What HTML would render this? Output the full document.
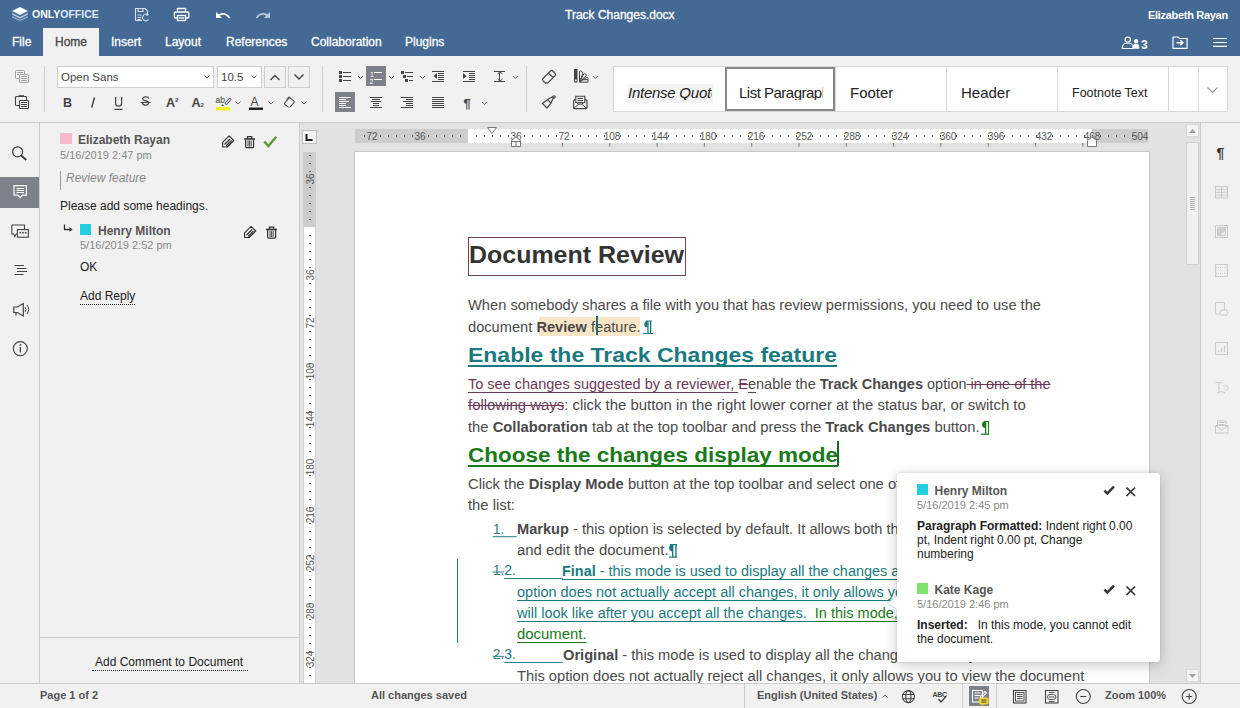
<!DOCTYPE html>
<html><head><meta charset="utf-8">
<style>
*{box-sizing:border-box;margin:0;padding:0}
html,body{width:1240px;height:708px;overflow:hidden;background:#f1f1f1;font-family:"Liberation Sans",sans-serif;color:#444}
.a{position:absolute}
.t{position:absolute;white-space:pre;line-height:1}
svg{position:absolute;overflow:visible}
.dl{position:absolute;white-space:pre;line-height:0;transform-origin:0 0}
.dl b{font-weight:bold}
#hdr{left:0;top:0;width:1240px;height:56px;background:#446995}
.tab{position:absolute;top:35px;font-size:12px;color:#fff;white-space:pre;line-height:14px;-webkit-text-stroke:0.3px currentColor}
#tb{left:0;top:56px;width:1240px;height:67px;background:#f1f1f1;border-bottom:1px solid #cbcbcb}
.sep{position:absolute;width:1px;background:#d5d5d5}
.combo{position:absolute;background:#fff;border:1px solid #cfcfcf;height:21px}
.btnb{position:absolute;border:1px solid #cfcfcf;height:21px;width:21px}
.act{position:absolute;background:#7d858c;width:20px;height:20px}
#lb{left:0;top:123px;width:40px;height:560px;background:#f1f1f1;border-right:1px solid #cbcbcb}
#pnl{left:40px;top:123px;width:260px;height:560px;background:#f1f1f1;border-right:1px solid #cbcbcb}
#cv{left:300px;top:123px;width:900px;height:560px;background:#e2e2e2;overflow:hidden}
#rb{left:1200px;top:123px;width:40px;height:560px;background:#f1f1f1;border-left:1px solid #cbcbcb}
#sb{left:0;top:683px;width:1240px;height:25px;background:#f1f1f1;border-top:1px solid #cbcbcb}
.gi{position:absolute;top:0;height:45px;border-right:1px solid #dadada;background:#fff}
.caret{position:absolute;width:5px;height:5px;border-right:1px solid #666;border-bottom:1px solid #666;transform:rotate(45deg)}
</style></head>
<body>
<!-- HEADER -->
<div id="hdr" class="a">
  <div class="a" style="left:43px;top:28px;width:56px;height:28px;background:#f1f1f1"></div>
  <div class="tab" style="left:12px">File</div>
  <div class="tab" style="left:55px;color:#444">Home</div>
  <div class="tab" style="left:111px">Insert</div>
  <div class="tab" style="left:165px">Layout</div>
  <div class="tab" style="left:226px">References</div>
  <div class="tab" style="left:311px">Collaboration</div>
  <div class="tab" style="left:405px">Plugins</div>
  <div class="t" style="left:565px;top:9px;font-size:12px;color:#fff;-webkit-text-stroke:0.3px #fff">Track Changes.docx</div>
  <div class="t" style="left:1148px;top:10px;font-size:11px;font-weight:bold;letter-spacing:-0.3px;color:#fff">Elizabeth Rayan</div>
  <div class="t" style="left:32px;top:9px;font-size:10.5px;font-weight:bold;color:#fff">ONLY<span style="color:#dfe8f5">OFFICE</span></div>
</div>
<svg style="left:0;top:0" width="1240" height="56">
 <g>
  <path d="M20 7l8 4-8 4-8-4z" fill="#fff"/>
  <path d="M12.5 13.2l7.5 3.8 7.5-3.8 0.5 0.3v1l-8 4-8-4v-1z" fill="#c9d6e8"/>
  <path d="M12.5 16.2l7.5 3.6 7.5-3.6 0.5 0.3v1l-8 3.6-8-3.6v-1z" fill="#9fb5d3"/>
 </g>
 <g fill="none" stroke="#d6e1ef" stroke-width="1.1">
  <path d="M142 20.5h-6.5v-12h9.5l2.5 2.5v3"/>
  <path d="M138 8.5v3h5v-3M137.5 15h4M137.5 17.5h4M137.5 19.5h3"/>
  <path d="M148.5 19.5a3.3 3.3 0 1 1-1-5M146.5 13.5l1.5 1-1.5 1.3"/>
 </g>
 <g fill="none" stroke="#fff" stroke-width="1.3">
  <rect x="174.4" y="12" width="14.4" height="6" rx="1.2"/>
  <path d="M177.5 12v-3.5h8v3.5"/>
  <rect x="177.5" y="15.5" width="8" height="5" fill="#446995"/>
  <path d="M179 18h5"/>
 </g>
 <path d="M216 12v6h6l-2.2-2.2c3-1.8 6.5-1 8.8 2.5l1.6-0.8c-2.5-4.5-7.5-5.8-11.7-3.2z" fill="#fff"/>
 <path d="M270 12v6h-6l2.2-2.2c-3-1.8-6.5-1-8.8 2.5l-1.6-0.8c2.5-4.5 7.5-5.8 11.7-3.2z" fill="#b6c7de"/>
 <g fill="none" stroke="#fff" stroke-width="1.2">
  <circle cx="1127.8" cy="39.6" r="2.6"/>
  <path d="M1122.4 48.5v-1.5a5.4 4 0 0 1 10.8 0v1.5z"/>
  <path d="M1173 37h5l1.5 1.5h7.6v9.8h-14.1z"/>
  <path d="M1213 38.5h14M1213 42.5h14M1213 46.4h14"/>
 </g>
 <circle cx="1136" cy="41.3" r="2.2" fill="#fff"/>
 <path d="M1132.8 48.8v-2a3.2 3 0 0 1 6.4 0v2z" fill="#fff"/>
 <path d="M1176.5 42.8h6M1180.3 40.3l2.5 2.5-2.5 2.5" fill="none" stroke="#fff" stroke-width="1.5"/>
 <text x="1141" y="48.5" font-family="Liberation Sans" font-weight="bold" font-size="12" fill="#fff">3</text>
</svg>
<!-- TOOLBAR -->
<div id="tb" class="a"></div>
<!-- toolbar contents -->
<svg style="left:0;top:0" width="1240" height="123">
 <g fill="none" stroke="#a0a0a0" stroke-width="1">
  <rect x="15.5" y="70.5" width="9" height="8" rx="0.8" fill="#f1f1f1"/>
  <rect x="19.5" y="74.5" width="9" height="8" rx="0.8" fill="#f1f1f1"/>
  <path d="M17 72.5h6M17 74.5h2M21 76.5h6M21 78.5h6M21 80.5h6"/>
 </g>
 <g fill="none" stroke="#444" stroke-width="1.1">
  <rect x="15.5" y="96.5" width="11" height="9" rx="0.8"/>
  <rect x="19.5" y="100.5" width="9" height="8" rx="0.8" fill="#f1f1f1"/>
  <path d="M21 102.5h6M21 104.5h6M21 106.5h6" stroke-width="1"/>
  <path d="M18.5 96h5.5" stroke-width="1.6"/>
 </g>
 <rect x="44" y="66" width="1" height="46" fill="#cfcfcf"/>
 <rect x="322" y="66" width="1" height="46" fill="#cfcfcf"/>
 <rect x="526" y="66" width="1" height="46" fill="#cfcfcf"/>
 <!-- font combos -->
 <rect x="57.5" y="66.5" width="156" height="21" fill="#fff" stroke="#cfcfcf"/>
 <rect x="217.5" y="66.5" width="44" height="21" fill="#fff" stroke="#cfcfcf"/>
 <rect x="264.5" y="66.5" width="21" height="21" fill="none" stroke="#cfcfcf"/>
 <rect x="288.5" y="66.5" width="21" height="21" fill="none" stroke="#cfcfcf"/>
 <g fill="none" stroke="#555" stroke-width="1">
  <path d="M204.5 75.5l2.5 2.5 2.5-2.5M251.5 75.5l2.5 2.5 2.5-2.5"/>
 </g>
 <g fill="none" stroke="#444" stroke-width="1.4">
  <path d="M270.5 80l4.5-4.5 4.5 4.5M294.5 74.5l4.5 4.5 4.5-4.5"/>
 </g>
 <!-- carets -->
 <g fill="none" stroke="#666" stroke-width="1">
  <path d="M235.5 101.5l2.5 2.5 2.5-2.5M268.5 101.5l2.5 2.5 2.5-2.5M301.5 101.5l2.5 2.5 2.5-2.5"/>
  <path d="M358 76l2.5 2.5 2.5-2.5M389 76l2.5 2.5 2.5-2.5M420 76l2.5 2.5 2.5-2.5M513 76l2.5 2.5 2.5-2.5M593 76l2.5 2.5 2.5-2.5M482 102l2.5 2.5 2.5-2.5"/>
 </g>
 <!-- B I U S -->
 <text x="63" y="107" font-family="Liberation Sans" font-weight="bold" font-size="12.5" fill="#444">B</text>
 <path d="M94.5 97.5l-2.8 10" stroke="#444" stroke-width="1.5"/>
 <g stroke="#444" stroke-width="1.2" fill="none">
  <path d="M115.6 97v6.2a3 3 0 0 0 6 0V97M114.5 109.4h8"/>
  <path d="M148.6 98.8a3 2 0 0 0-6 0.2c0 1.8 6 1.6 6 3.8a3 2.2 0 0 1-6.2 0M140.6 102.5h10"/>
 </g>
  <text x="166" y="107" font-family="Liberation Sans" font-weight="bold" font-size="12.5" fill="#444">A</text>
 <text x="175" y="102" font-family="Liberation Sans" font-weight="bold" font-size="6" fill="#444">2</text>
 <text x="191.5" y="107" font-family="Liberation Sans" font-weight="bold" font-size="12.5" fill="#444">A</text>
 <text x="200.5" y="107" font-family="Liberation Sans" font-weight="bold" font-size="6" fill="#444">2</text>
 <!-- highlight -->
 <text x="215.5" y="103" font-family="Liberation Sans" font-size="8.5" fill="#444">ab</text>
 <path d="M225 103.5l4.5-5.5 1.6 1.3-4.5 5.5z" fill="none" stroke="#444" stroke-width="1"/>
 <path d="M221 106l1.5-1.8 1.5 1.8z" fill="#444"/>
 <rect x="216" y="107" width="14" height="3.5" fill="#f0f020"/>
 <text x="250.5" y="106" font-family="Liberation Sans" font-size="12" fill="#444">A</text>
 <rect x="249" y="107.5" width="14" height="2.5" fill="#222"/>
 <path d="M284.8 103l4.2-4.8a1 1 0 0 1 1.4-0.1l3.5 3a1 1 0 0 1 0.1 1.4l-4.2 4.8a1 1 0 0 1-1.4 0.1l-3.5-3a1 1 0 0 1-0.1-1.4z" fill="none" stroke="#444" stroke-width="1.1"/>
 <path d="M287 99.5c0-2 2-3 3.5-2" fill="none" stroke="#444" stroke-width="1"/>
 <rect x="282" y="107.5" width="14" height="2.5" fill="#fafafa"/>
 <!-- bullets -->
 <g fill="#444">
  <rect x="339" y="71" width="3" height="3"/><rect x="339" y="75" width="3" height="3"/><rect x="339" y="79" width="3" height="3"/>
  <rect x="343" y="72" width="8" height="1"/><rect x="343" y="76" width="8" height="1"/><rect x="343" y="80" width="8" height="1"/>
  <rect x="401" y="71" width="3" height="3"/><rect x="403" y="75" width="3" height="3"/><rect x="405" y="79" width="3" height="3"/>
  <rect x="405" y="72" width="8" height="1"/><rect x="407" y="76" width="6" height="1"/><rect x="409" y="80" width="4" height="1"/>
 </g>
 <rect x="366" y="66" width="20" height="20" fill="#7d828a"/>
 <text x="370" y="77" font-family="Liberation Sans" font-size="7" fill="#fff">1</text>
 <text x="369.5" y="84" font-family="Liberation Sans" font-size="7" fill="#fff">2</text>
 <rect x="374" y="72" width="8" height="1" fill="#fff"/><rect x="374" y="79" width="8" height="1" fill="#fff"/>
 <!-- align -->
 <rect x="335" y="92" width="20" height="20" fill="#7d828a"/>
 <g fill="#fff"><rect x="339" y="97" width="12" height="1"/><rect x="339" y="99" width="7" height="1"/><rect x="339" y="101" width="10" height="1"/><rect x="339" y="103" width="7" height="1"/><rect x="339" y="105" width="7" height="1"/><rect x="339" y="107" width="12" height="1"/></g>
 <g fill="#444">
  <rect x="370" y="97" width="12" height="1"/><rect x="372" y="99" width="8" height="1"/><rect x="371" y="101" width="10" height="1"/><rect x="373" y="103" width="6" height="1"/><rect x="373" y="105" width="6" height="1"/><rect x="370" y="107" width="12" height="1"/>
  <rect x="401" y="97" width="12" height="1"/><rect x="406" y="99" width="7" height="1"/><rect x="403" y="101" width="10" height="1"/><rect x="406" y="103" width="7" height="1"/><rect x="406" y="105" width="7" height="1"/><rect x="401" y="107" width="12" height="1"/>
  <rect x="432" y="97" width="12" height="1"/><rect x="432" y="99" width="12" height="1"/><rect x="432" y="101" width="12" height="1"/><rect x="432" y="103" width="12" height="1"/><rect x="432" y="105" width="12" height="1"/><rect x="432" y="107" width="12" height="1"/>
  <rect x="432" y="71" width="12" height="1"/><rect x="438" y="73" width="6" height="1"/><rect x="438" y="75" width="6" height="1"/><rect x="438" y="77" width="6" height="1"/><rect x="438" y="79" width="6" height="1"/><rect x="432" y="81" width="12" height="1"/>
  <path d="M437 73v6l-3.5-3z"/>
  <rect x="463" y="71" width="12" height="1"/><rect x="469" y="73" width="6" height="1"/><rect x="469" y="75" width="6" height="1"/><rect x="469" y="77" width="6" height="1"/><rect x="469" y="79" width="6" height="1"/><rect x="463" y="81" width="12" height="1"/>
  <path d="M463 73v6l3.5-3z"/>
  <rect x="494" y="71" width="11" height="1"/><rect x="494" y="81" width="11" height="1"/><rect x="499" y="72" width="1" height="9"/>
 </g>
 <path d="M497.5 74l2.5-2 2.5 2M497.5 79l2.5 2 2.5-2" fill="none" stroke="#444" stroke-width="1"/>
 <text x="463.5" y="108" font-family="Liberation Sans" font-weight="bold" font-size="13" fill="#444">¶</text>
 <!-- eraser etc -->
 <g fill="none" stroke="#444" stroke-width="1.2">
  <path d="M543 78.5l7.5-7.5a1.6 1.6 0 0 1 2.2 0l2.4 2.4a1.6 1.6 0 0 1 0 2.2l-7.5 7.5h-2.2l-2.4-2.4a1.6 1.6 0 0 1 0-2.2zM548.5 73l4.5 4.5"/>
  <path d="M542.5 103.5l5-4 3.5 3.5-4 5z M547.5 99.5l5.5-3M551 103l2.5-5.5"/>
  <circle cx="554" cy="97" r="1.2"/>
  <path d="M573.6 100.5v7.2a1 1 0 0 0 1 1h11.4a1 1 0 0 0 1-1v-7.2l-2-1.5M573.6 100.5l2-1.5"/>
  <path d="M573.8 108.3l5-4.2h2.8l5 4.2M575.5 102l3.3 2.1M585 102l-3.4 2.1" stroke-width="1"/>
  <path d="M575.8 103v-6.7h9v6.7" stroke-width="1.1"/>
  <path d="M577.5 98.5h5.5M577.5 100.5h5.5M577.5 102.5h5.5" stroke-width="1"/>
 </g>
 <rect x="574" y="69" width="3.5" height="13.5" fill="#444"/>
 <rect x="575" y="79.5" width="1.6" height="1.8" fill="#fff"/>
 <g fill="none" stroke="#444" stroke-width="1">
  <path d="M579.5 82.2h8.5v-2.5h-6"/>
  <path d="M579.5 81.5v-9.5a1.2 1.2 0 0 1 2 -0.8l1.5 1.8-3.5 8.5"/>
  <path d="M579.8 81.5l4-7.5a1.2 1.2 0 0 1 1.8 0l1 1.5-6.8 6"/>
  <path d="M580 81.8l6.5-4.3a1.2 1.2 0 0 1 1.5 0.8l0 1.2"/>
 </g>
</svg>
<!-- gallery -->
<div class="a" style="left:613px;top:66px;width:615px;height:46px;border:1px solid #d8d8d8;background:#fff"></div>
<div class="a" style="left:725px;top:66px;width:1px;height:46px;background:#d8d8d8"></div>
<div class="a" style="left:835px;top:66px;width:1px;height:46px;background:#d8d8d8"></div>
<div class="a" style="left:946px;top:66px;width:1px;height:46px;background:#d8d8d8"></div>
<div class="a" style="left:1057px;top:66px;width:1px;height:46px;background:#d8d8d8"></div>
<div class="a" style="left:1168px;top:66px;width:1px;height:46px;background:#d8d8d8"></div>
<div class="a" style="left:1198px;top:66px;width:1px;height:46px;background:#d8d8d8"></div>
<div class="a" style="left:725px;top:67px;width:110px;height:44px;border:2px solid #888"></div>
<div class="a" style="left:627px;top:84px;width:86px;height:19px;background:#f4f4f4"></div>
<div class="t" style="left:628px;top:85px;font-size:15px;font-style:italic;color:#222;width:84px;overflow:hidden;letter-spacing:-0.25px">Intense Quote</div>
<div class="t" style="left:739px;top:85px;font-size:15px;color:#222;width:84px;overflow:hidden;letter-spacing:-0.5px">List Paragraph</div>
<div class="t" style="left:850px;top:85px;font-size:15px;color:#222">Footer</div>
<div class="t" style="left:961px;top:85px;font-size:15px;color:#222">Header</div>
<div class="t" style="left:1072px;top:87px;font-size:12.5px;color:#222">Footnote Text</div>
<svg style="left:0;top:0" width="1240" height="123"><path d="M1207.5 87.5l5 5 5-5" fill="none" stroke="#999" stroke-width="1.2"/></svg>
<div class="t" style="left:61px;top:72px;font-size:11.5px;color:#444">Open Sans</div>
<div class="t" style="left:221px;top:72px;font-size:11.5px;color:#444">10.5</div>

<div id="lb" class="a"></div>
<div class="a" style="left:0;top:177px;width:39px;height:31px;background:#7d828a"></div>
<svg style="left:0;top:0" width="40" height="400">
 <g fill="none" stroke="#444" stroke-width="1.3">
  <circle cx="17.6" cy="151.8" r="5"/>
  <path d="M21.2 155.4l5 4.5" stroke-width="2"/>
  <path d="M11.8 225v9h2l1 2.5 1.5-2.5h1" stroke-width="1.1"/>
  <path d="M12 225h12.5v4" stroke-width="1.1"/>
  <rect x="17.4" y="229.6" width="11" height="7.6" stroke-width="1.1"/>
  <path d="M14.5 265.5h9.5M17 268.5h9.5M17 271.5h10M14.5 274.5h9" stroke-width="1.1"/>
  <path d="M13.8 307h3.5l6-3.5v12.5l-6-3.5h-3.5zM16 312v3.5" stroke-width="1.2"/>
  <path d="M25 307a4 4 0 0 1 0 5M27 305a7 7 0 0 1 0 9" stroke-width="1"/>
  <circle cx="20.3" cy="348.6" r="7" stroke-width="1.1"/>
  <path d="M20.3 347v5.5" stroke-width="1.3"/>
 </g>
 <g fill="#444"><circle cx="20.4" cy="344.8" r="0.9"/><rect x="19.5" y="231.9" width="1.6" height="1.6"/><rect x="22.2" y="231.9" width="1.6" height="1.6"/><rect x="24.9" y="231.9" width="1.6" height="1.6"/></g>
 <g fill="none" stroke="#fff" stroke-width="1.1">
  <path d="M14 185.6h12.4v9.5h-4l-2.2 2.5-2.2-2.5h-4z"/>
  <path d="M16.5 188.5h7.5M16.5 190.5h7.5M16.5 192.5h7.5" stroke-width="1"/>
 </g>
</svg>
<div id="pnl" class="a"></div>
<!-- comment panel -->
<div class="a" style="left:60px;top:133px;width:12px;height:11px;background:#f6b8cb"></div>
<div class="t" style="left:78px;top:134px;font-size:12px;font-weight:bold;color:#555">Elizabeth Rayan</div>
<div class="t" style="left:60px;top:150px;font-size:11px;color:#888">5/16/2019 2:47 pm</div>
<div class="a" style="left:60px;top:171px;width:1px;height:19px;background:#999"></div>
<div class="t" style="left:66px;top:172px;font-size:12px;font-style:italic;color:#888">Review feature</div>
<div class="t" style="left:60px;top:200px;font-size:12px;color:#222">Please add some headings.</div>
<div class="a" style="left:80px;top:224px;width:11px;height:11px;background:#22cfe0"></div>
<div class="t" style="left:98px;top:225px;font-size:12px;font-weight:bold;color:#555">Henry Milton</div>
<div class="t" style="left:80px;top:240px;font-size:11px;color:#888">5/16/2019 2:52 pm</div>
<div class="t" style="left:80px;top:261px;font-size:12px;color:#222">OK</div>
<div class="t" style="left:80px;top:290px;font-size:12px;color:#222">Add Reply</div>
<div class="a" style="left:80px;top:304px;width:55px;height:0;border-top:1px dotted #222"></div>
<div class="a" style="left:40px;top:637px;width:259px;height:1px;background:#cbcbcb"></div>
<div class="t" style="left:95px;top:656px;font-size:12px;color:#222">Add Comment to Document</div>
<div class="a" style="left:92px;top:670px;width:156px;height:0;border-top:1px dotted #222"></div>
<svg style="left:0;top:0" width="300" height="320">
 <defs>
  <g id="pen"><path d="M222.6 147v-4.6l6.5-6.5 4.6 4.6-6.5 6.5z M224.5 144.5l5.5-5.5M226 146l5.5-5.5" fill="none" stroke="#333" stroke-width="1.2" stroke-linejoin="round"/></g>
  <g id="trash"><path d="M244.2 139h10.8" stroke="#333" stroke-width="1.6"/><path d="M247.5 138.5v-1.8h4.2v1.8" fill="none" stroke="#333" stroke-width="1.2"/><path d="M245.6 139.5v7a1.2 1.2 0 0 0 1.2 1.2h5.6a1.2 1.2 0 0 0 1.2-1.2v-7" fill="none" stroke="#333" stroke-width="1.2"/><path d="M248 140.5v6M249.6 140.5v6M251.2 140.5v6" stroke="#333" stroke-width="0.9"/></g>
 </defs>
 <use href="#pen"/><use href="#trash"/>
 <use href="#pen" transform="translate(22,90.5)"/><use href="#trash" transform="translate(22,90.5)"/>
 <path d="M64.5 224.5v5h6" fill="none" stroke="#333" stroke-width="1.3"/>
 <path d="M69.5 227l3 2.5-3 2.5z" fill="#333"/>
 <path d="M264.3 141.5l4 4.6 8-9.4" fill="none" stroke="#5b9b3b" stroke-width="2.4"/>
</svg>
<div id="cv" class="a"></div>
<!-- canvas -->
<div class="a" style="left:302px;top:130px;width:15px;height:14px;background:#f4f4f4;border:1px solid #c0c0c0"></div>
<svg style="left:0;top:0" width="330" height="160"><path d="M306.5 134v6h6" fill="none" stroke="#222" stroke-width="2"/></svg>
<div class="a" style="left:355px;top:129px;width:793px;height:14px;background:#cdcdcd"></div>
<div class="a" style="left:468px;top:129px;width:624px;height:14px;background:#fff"></div>
<div class="a" style="left:303px;top:152px;width:13px;height:531px;background:#fff;border-left:1px solid #d0d0d0;border-right:1px solid #d0d0d0"></div>
<div class="a" style="left:303px;top:152px;width:13px;height:75px;background:#cdcdcd"></div>
<div class="a" style="left:354px;top:151px;width:796px;height:540px;background:#fff;border:1px solid #c8c8c8"></div>
<div class="a" style="left:0;top:0;width:1200px;height:683px;overflow:hidden">
<!--RULER-->
<svg style="left:0;top:0" width="1200" height="683">
<path d="M364.5 135v2M380.5 135v2M388.5 135v2M396.5 135v2M404.5 135v2M412.5 135v2M428.5 135v2M436.5 135v2M444.5 135v2M452.5 135v2M460.5 135v2M476.5 135v2M484.5 135v2M492.5 135v2M500.5 135v2M508.5 135v2M524.5 135v2M532.5 135v2M540.5 135v2M548.5 135v2M556.5 135v2M572.5 135v2M580.5 135v2M588.5 135v2M596.5 135v2M604.5 135v2M620.5 135v2M628.5 135v2M636.5 135v2M644.5 135v2M652.5 135v2M668.5 135v2M676.5 135v2M684.5 135v2M692.5 135v2M700.5 135v2M716.5 135v2M724.5 135v2M732.5 135v2M740.5 135v2M748.5 135v2M764.5 135v2M772.5 135v2M780.5 135v2M788.5 135v2M796.5 135v2M812.5 135v2M820.5 135v2M828.5 135v2M836.5 135v2M844.5 135v2M860.5 135v2M868.5 135v2M876.5 135v2M884.5 135v2M892.5 135v2M908.5 135v2M916.5 135v2M924.5 135v2M932.5 135v2M940.5 135v2M956.5 135v2M964.5 135v2M972.5 135v2M980.5 135v2M988.5 135v2M1004.5 135v2M1012.5 135v2M1020.5 135v2M1028.5 135v2M1036.5 135v2M1052.5 135v2M1060.5 135v2M1068.5 135v2M1076.5 135v2M1084.5 135v2M1100.5 135v2M1108.5 135v2M1116.5 135v2M1124.5 135v2M1132.5 135v2" stroke="#555" stroke-width="1"/>
<text x="372" y="140" text-anchor="middle" font-family="Liberation Sans" font-size="10" fill="#555">72</text>
<text x="420" y="140" text-anchor="middle" font-family="Liberation Sans" font-size="10" fill="#555">36</text>
<text x="516" y="140" text-anchor="middle" font-family="Liberation Sans" font-size="10" fill="#555">36</text>
<text x="564" y="140" text-anchor="middle" font-family="Liberation Sans" font-size="10" fill="#555">72</text>
<text x="612" y="140" text-anchor="middle" font-family="Liberation Sans" font-size="10" fill="#555">108</text>
<text x="660" y="140" text-anchor="middle" font-family="Liberation Sans" font-size="10" fill="#555">144</text>
<text x="708" y="140" text-anchor="middle" font-family="Liberation Sans" font-size="10" fill="#555">180</text>
<text x="756" y="140" text-anchor="middle" font-family="Liberation Sans" font-size="10" fill="#555">216</text>
<text x="804" y="140" text-anchor="middle" font-family="Liberation Sans" font-size="10" fill="#555">252</text>
<text x="852" y="140" text-anchor="middle" font-family="Liberation Sans" font-size="10" fill="#555">288</text>
<text x="900" y="140" text-anchor="middle" font-family="Liberation Sans" font-size="10" fill="#555">324</text>
<text x="948" y="140" text-anchor="middle" font-family="Liberation Sans" font-size="10" fill="#555">360</text>
<text x="996" y="140" text-anchor="middle" font-family="Liberation Sans" font-size="10" fill="#555">396</text>
<text x="1044" y="140" text-anchor="middle" font-family="Liberation Sans" font-size="10" fill="#555">432</text>
<text x="1092" y="140" text-anchor="middle" font-family="Liberation Sans" font-size="10" fill="#555">468</text>
<text x="1140" y="140" text-anchor="middle" font-family="Liberation Sans" font-size="10" fill="#555">504</text>
<path d="M562.5 143v3.5M609.8 143v3.5M657.1 143v3.5M704.4 143v3.5M751.7 143v3.5M799.0 143v3.5M846.3 143v3.5M893.6 143v3.5M940.9 143v3.5M988.2 143v3.5M1035.5 143v3.5M1082.8 143v3.5" stroke="#777" stroke-width="1"/>
<path d="M487.5 127.5h9l-4.5 6z" fill="#fff" stroke="#777" stroke-width="1"/>
<path d="M511.5 146.5v-6l4.5-3.5 4.5 3.5v6zM511.5 141.5h9M516 141.5v5" fill="#fff" stroke="#777" stroke-width="1"/>
<path d="M1087.5 146.5v-6l4.5-3.5 4.5 3.5v6z" fill="#fff" stroke="#777" stroke-width="1"/>
<path d="M309 155.5h2M309 163.5h2M309 171.5h2M309 187.5h2M309 195.5h2M309 203.5h2M309 211.5h2M309 219.5h2M309 235.5h2M309 243.5h2M309 251.5h2M309 259.5h2M309 267.5h2M309 283.5h2M309 291.5h2M309 299.5h2M309 307.5h2M309 315.5h2M309 331.5h2M309 339.5h2M309 347.5h2M309 355.5h2M309 363.5h2M309 379.5h2M309 387.5h2M309 395.5h2M309 403.5h2M309 411.5h2M309 427.5h2M309 435.5h2M309 443.5h2M309 451.5h2M309 459.5h2M309 475.5h2M309 483.5h2M309 491.5h2M309 499.5h2M309 507.5h2M309 523.5h2M309 531.5h2M309 539.5h2M309 547.5h2M309 555.5h2M309 571.5h2M309 579.5h2M309 587.5h2M309 595.5h2M309 603.5h2M309 619.5h2M309 627.5h2M309 635.5h2M309 643.5h2M309 651.5h2M309 667.5h2M309 675.5h2M309 683.5h2" stroke="#555" stroke-width="1"/>
<text x="179" y="313.5" transform="rotate(-90 0 0) translate(-358 0)" text-anchor="middle" font-family="Liberation Sans" font-size="10" fill="#555">36</text>
<text x="275" y="313.5" transform="rotate(-90 0 0) translate(-550 0)" text-anchor="middle" font-family="Liberation Sans" font-size="10" fill="#555">36</text>
<text x="323" y="313.5" transform="rotate(-90 0 0) translate(-646 0)" text-anchor="middle" font-family="Liberation Sans" font-size="10" fill="#555">72</text>
<text x="371" y="313.5" transform="rotate(-90 0 0) translate(-742 0)" text-anchor="middle" font-family="Liberation Sans" font-size="10" fill="#555">108</text>
<text x="419" y="313.5" transform="rotate(-90 0 0) translate(-838 0)" text-anchor="middle" font-family="Liberation Sans" font-size="10" fill="#555">144</text>
<text x="467" y="313.5" transform="rotate(-90 0 0) translate(-934 0)" text-anchor="middle" font-family="Liberation Sans" font-size="10" fill="#555">180</text>
<text x="515" y="313.5" transform="rotate(-90 0 0) translate(-1030 0)" text-anchor="middle" font-family="Liberation Sans" font-size="10" fill="#555">216</text>
<text x="563" y="313.5" transform="rotate(-90 0 0) translate(-1126 0)" text-anchor="middle" font-family="Liberation Sans" font-size="10" fill="#555">252</text>
<text x="611" y="313.5" transform="rotate(-90 0 0) translate(-1222 0)" text-anchor="middle" font-family="Liberation Sans" font-size="10" fill="#555">288</text>
<text x="659" y="313.5" transform="rotate(-90 0 0) translate(-1318 0)" text-anchor="middle" font-family="Liberation Sans" font-size="10" fill="#555">324</text>
</svg>
<!--/RULER-->
<!--DOC-->
<div class="a" style="left:539px;top:317px;width:101px;height:19px;background:#f9e6c6"></div>
<div class="a" style="left:468px;top:237px;width:218px;height:39px;border:1px solid #6e4452"></div>
<div class="dl" id="dl0" style="left:469px;top:242.1px;font:bold 23px 'Liberation Sans',sans-serif;color:#333;transform:scaleX(1.0853)"><span>Document Review</span></div>
<div class="dl" id="dl1" style="left:468px;top:296.7px;font:14px 'Liberation Sans',sans-serif;color:#4a4a4a;transform:scaleX(1.0474)"><span>When somebody shares a file with you that has review permissions, you need to use the</span></div>
<div class="dl" id="dl2" style="left:468px;top:318.9px;font:14px 'Liberation Sans',sans-serif;color:#4a4a4a;transform:scaleX(1.0461)"><span>document <b>Review</b> feature.</span></div>
<div class="dl" id="dl3" style="left:468px;top:342.7px;font:bold 21px 'Liberation Sans',sans-serif;color:#1a7a80;transform:scaleX(1.0940)"><span><span style="text-decoration:underline;text-decoration-skip-ink:none;text-underline-offset:3px">Enable the Track Changes feature</span></span></div>
<div class="dl" id="dl4" style="left:468px;top:375.7px;font:14px 'Liberation Sans',sans-serif;color:#4a4a4a;transform:scaleX(1.0365)"><span><span style="color:#6b3a55;text-decoration:underline;text-decoration-color:#6b3a55;text-decoration-skip-ink:none;text-underline-offset:3px">To see changes suggested by a reviewer, </span><span style="color:#6b3a55;text-decoration:line-through">E</span><span style="text-decoration:underline;text-decoration-skip-ink:none;text-underline-offset:3px">e</span>nable the <b>Track Changes</b> option<span style="color:#6b3a55;text-decoration:line-through"> in one of the</span></span></div>
<div class="dl" id="dl5" style="left:468px;top:397.1px;font:14px 'Liberation Sans',sans-serif;color:#4a4a4a;transform:scaleX(1.0651)"><span><span style="color:#6b3a55;text-decoration:line-through">following ways</span>: click the button in the right lower corner at the status bar, or switch to</span></div>
<div class="dl" id="dl6" style="left:468px;top:418.8px;font:14px 'Liberation Sans',sans-serif;color:#4a4a4a;transform:scaleX(1.0552)"><span>the <b>Collaboration</b> tab at the top toolbar and press the <b>Track Changes</b> button.</span></div>
<div class="dl" id="dl7" style="left:468px;top:442.6px;font:bold 21px 'Liberation Sans',sans-serif;color:#1a7a1a;transform:scaleX(1.0712)"><span><span style="text-decoration:underline;text-decoration-skip-ink:none;text-underline-offset:3px">Choose the changes display mode</span></span></div>
<div class="dl" id="dl8" style="left:468px;top:475.5px;font:14px 'Liberation Sans',sans-serif;color:#4a4a4a;transform:scaleX(1.0538)"><span>Click the <b>Display Mode</b> button at the top toolbar and select one</span> of the modes from</div>
<div class="dl" id="dl9" style="left:468px;top:496.9px;font:14px 'Liberation Sans',sans-serif;color:#4a4a4a;transform:scaleX(1.0573)"><span>the list:</span></div>
<div class="dl" id="dl10" style="left:516.7px;top:521.0px;font:14px 'Liberation Sans',sans-serif;color:#4a4a4a;transform:scaleX(1.0437)"><span><b>Markup</b> - this option is selected by default. It allows both</span> the author and</div>
<div class="dl" id="dl11" style="left:516.7px;top:542.0px;font:14px 'Liberation Sans',sans-serif;color:#4a4a4a;transform:scaleX(1.0643)"><span>and edit the document.</span></div>
<div class="dl" id="dl12" style="left:562.4px;top:562.5px;font:14px 'Liberation Sans',sans-serif;color:#1a7a80;transform:scaleX(1.0321)"><span><span style="color:#1a7a80;text-decoration:underline;text-decoration-color:#1a7a80;text-decoration-skip-ink:none;text-underline-offset:3px"><b>Final</b> - this mode is used to display all the changes</span></span><span style="color:#1a7a80;text-decoration:underline;text-decoration-color:#1a7a80;text-decoration-skip-ink:none;text-underline-offset:3px"> as if they</span></div>
<div class="dl" id="dl13" style="left:516.7px;top:583.9px;font:14px 'Liberation Sans',sans-serif;color:#1a7a80;transform:scaleX(1.0358)"><span><span style="color:#1a7a80;text-decoration:underline;text-decoration-color:#1a7a80;text-decoration-skip-ink:none;text-underline-offset:3px">option does not actually accept all changes, it only allows</span></span><span style="color:#1a7a80;text-decoration:underline;text-decoration-color:#1a7a80;text-decoration-skip-ink:none;text-underline-offset:3px"> you to see how</span></div>
<div class="dl" id="dl14" style="left:516.7px;top:604.7px;font:14px 'Liberation Sans',sans-serif;color:#1a7a80;transform:scaleX(1.0370)"><span><span style="color:#1a7a80;text-decoration:underline;text-decoration-color:#1a7a80;text-decoration-skip-ink:none;text-underline-offset:3px">will look like after you accept all the changes.</span></span><span style="color:#1a7a80;text-decoration:underline;text-decoration-color:#1a7a80;text-decoration-skip-ink:none;text-underline-offset:3px">&nbsp; </span><span style="color:#1a7a1a;text-decoration:underline;text-decoration-color:#1a7a1a;text-decoration-skip-ink:none;text-underline-offset:3px">In this mode, you cannot edit</span></div>
<div class="dl" id="dl15" style="left:516.7px;top:625.7px;font:14px 'Liberation Sans',sans-serif;color:#1a7a1a;transform:scaleX(1.0646)"><span><span style="color:#1a7a1a;text-decoration:underline;text-decoration-color:#1a7a1a;text-decoration-skip-ink:none;text-underline-offset:3px">document.</span></span></div>
<div class="dl" id="dl16" style="left:562.9px;top:646.7px;font:14px 'Liberation Sans',sans-serif;color:#4a4a4a;transform:scaleX(1.0449)"><span><b>Original</b> - this mode is used to display all the</span> changes as if they</div>
<div class="dl" id="dl17" style="left:516.7px;top:667.6px;font:14px 'Liberation Sans',sans-serif;color:#4a4a4a;transform:scaleX(1.0504)"><span>This option does not actually reject all changes, it only allows you to view the document</span></div>
<div class="a" style="left:596px;top:316px;width:2px;height:19px;background:#1a6f7a"></div>
<div class="a" style="left:837px;top:441px;width:2px;height:25px;background:#1a6a1a"></div>
<div class="a" style="left:457px;top:559px;width:1px;height:84px;background:#1a7a80"></div>
<svg style="left:0;top:0" width="1200" height="683">
 <g fill="#1a7a80" stroke="none">
  <path d="M647.5 321a3 3 0 0 0 0 6.5z"/><rect x="647.3" y="321" width="1.3" height="12"/><rect x="650" y="321" width="1.3" height="12"/><rect x="646" y="320.5" width="6" height="1"/><rect x="643" y="333" width="10" height="1"/>
  <path d="M672.5 544.5a3.2 3.2 0 0 0 0 6.8z"/><rect x="672" y="544" width="1.4" height="13.5"/><rect x="675.3" y="544" width="1.4" height="13.5"/><rect x="670" y="544" width="7" height="1.2"/><rect x="669" y="556.5" width="8" height="1.2"/>
 </g>
 <g fill="#1a7a1a" stroke="none">
  <path d="M985.5 421a3.2 3.2 0 0 0 0 7z"/><rect x="985" y="421" width="1.3" height="13"/><rect x="988" y="421" width="1" height="13.5"/><rect x="984" y="421" width="5" height="1"/><rect x="981" y="433.6" width="8" height="1.2"/>
 </g>
 <g font-family="Liberation Sans" font-size="14">
  <text x="492.7" y="533.7" fill="#3f8088">1.</text>
  <text x="492.7" y="575.2" fill="#3f8088">1.</text>
  <text x="504.3" y="575.2" fill="#1a7a80">2.</text>
  <text x="492.7" y="659.4" fill="#3f8088">2.</text>
  <text x="504.3" y="659.4" fill="#1a7a80">3.</text>
 </g>
 <g fill="#2a7e86">
  <rect x="492.7" y="536.2" width="24" height="1"/>
  <rect x="504.3" y="578" width="58.5" height="1"/>
  <rect x="504.3" y="662" width="58.5" height="1"/>
  <rect x="492.5" y="571.5" width="11.5" height="1"/>
  <rect x="492.5" y="655.8" width="11.5" height="1"/>
 </g>
</svg>
<!--/DOC-->
</div>
<!-- popup -->
<div class="a" style="left:897px;top:473px;width:263px;height:189px;background:#fff;border-radius:3px;box-shadow:0 3px 14px rgba(0,0,0,0.22), 0 0 2px rgba(0,0,0,0.15)"></div>
<svg style="left:0;top:0" width="1240" height="708">
 <path d="M898 595.5l-10.5 7.5 10.5 7.5" fill="#fff" stroke="#d5d5d5" stroke-width="1"/>
 <rect x="897" y="594" width="3" height="18" fill="#fff"/>
 <g fill="none" stroke="#333" stroke-width="1.7">
  <path d="M1126.5 487.5l8.5 8.5M1135 487.5l-8.5 8.5M1126.5 586.5l8.5 8.5M1135 586.5l-8.5 8.5"/>
 </g>
 <path d="M1103.5 491.5l1.8-1.8 2 2 5.7-6 1.8 1.8-7.5 7.8z M1103.5 590.5l1.8-1.8 2 2 5.7-6 1.8 1.8-7.5 7.8z" fill="#333"/>
</svg>
<div class="a" style="left:917px;top:483.5px;width:11px;height:11px;background:#22cfe0"></div>
<div class="t" style="left:934.5px;top:484.5px;font-size:12px;font-weight:bold;color:#555">Henry Milton</div>
<div class="t" style="left:917px;top:499.8px;font-size:11px;color:#888">5/16/2019 2:45 pm</div>
<div class="a" style="left:917px;top:519px;width:230px;font-size:12px;line-height:14.1px;color:#222;white-space:nowrap"><b>Paragraph Formatted:</b> Indent right 0.00<br>pt, Indent right 0.00 pt, Change<br>numbering</div>
<div class="a" style="left:917px;top:582.5px;width:11px;height:11px;background:#7fe36f"></div>
<div class="t" style="left:934.5px;top:583.8px;font-size:12px;font-weight:bold;color:#555">Kate Kage</div>
<div class="t" style="left:917px;top:598.5px;font-size:11px;color:#888">5/16/2019 2:46 pm</div>
<div class="a" style="left:917px;top:619px;width:230px;font-size:12px;line-height:13.9px;color:#222;white-space:nowrap"><b>Inserted:</b>&nbsp;&nbsp; In this mode, you cannot edit<br>the document.</div>
<!-- scrollbar -->
<div class="a" style="left:1186px;top:124px;width:13px;height:13px;background:#f4f4f4;border:1px solid #d8d8d8"></div>
<div class="a" style="left:1186px;top:142px;width:13px;height:123px;background:#f0f0f0;border:1px solid #cfcfcf"></div>
<div class="a" style="left:1186px;top:669px;width:13px;height:13px;background:#f4f4f4;border:1px solid #d8d8d8"></div>
<svg style="left:0;top:0" width="1240" height="708">
 <path d="M1189 133l3.5-4 3.5 4z M1189 674l3.5 4 3.5-4z" fill="#a0a0a0"/>
 <path d="M1190 197.5h5M1190 199.5h5M1190 201.5h5M1190 203.5h5M1190 205.5h5M1190 207.5h5M1190 209.5h5" stroke="#b0b0b0" stroke-width="1"/>
</svg>
<div id="rb" class="a"></div>
<svg style="left:1200px;top:0" width="40" height="440">
 <path d="M18 228h7v3l-4 4h-3z" fill="#d0d0d0"/>
 <text x="16.5" y="157.5" font-family="Liberation Sans" font-weight="bold" font-size="14" fill="#333">¶</text>
 <g fill="none" stroke="#c9c9c9" stroke-width="1">
  <rect x="15.5" y="186.5" width="12" height="11.5"/>
  <path d="M15.5 189.5h12M15.5 192.3h12M15.5 195.1h12M21.5 186.5v11.5"/>
  <rect x="15.5" y="225.5" width="12" height="12"/>
  <rect x="17.5" y="227.5" width="8" height="8"/>
  <rect x="15.5" y="264.5" width="12" height="12"/>
  <path d="M16 267.5h11M16 273.5h11" stroke-dasharray="1 1"/>
  <path d="M15.5 302.5h9v7M15.5 302.5v11.5h5"/>
  <ellipse cx="24" cy="312.5" rx="4" ry="2.8"/>
  <rect x="15.5" y="342.5" width="12" height="12"/>
  <path d="M18.5 352v-2M21.5 352v-4M24.5 352v-6"/>
  <path d="M15.5 382.5h7M19 382.5v8M23 386h3.5a1.5 1.5 0 0 1 0 4h-2M17 393a5 3 0 0 1 8 0"/>
  <rect x="15.5" y="425.5" width="12.5" height="7.5"/>
  <path d="M15.5 425.5l6.2 4.5 6.3-4.5M17.5 427v-6h8.5v6M19 422.5h5.5M19 424.5h5.5"/>
 </g>
</svg>
<div id="sb" class="a"></div>
<div class="t" style="left:40px;top:690px;font-size:11px;font-weight:bold;color:#555">Page 1 of 2</div>
<div class="t" style="left:371px;top:690px;font-size:11px;font-weight:bold;color:#555">All changes saved</div>
<div class="a" style="left:744px;top:684px;width:1px;height:24px;background:#cbcbcb"></div>
<div class="t" style="left:757px;top:690px;font-size:11px;font-weight:bold;color:#555">English (United States)</div>
<div class="a" style="left:962px;top:684px;width:1px;height:24px;background:#cbcbcb"></div>
<div class="a" style="left:996px;top:684px;width:1px;height:24px;background:#cbcbcb"></div>
<div class="a" style="left:969px;top:686px;width:20px;height:20px;background:#7d828a"></div>
<div class="t" style="left:1105px;top:690px;font-size:11px;font-weight:bold;color:#555">Zoom 100%</div>
<svg style="left:0;top:683px" width="1240" height="25">
 <path d="M882.5 14.5l2.5-2.5 2.5 2.5" fill="none" stroke="#666" stroke-width="1"/>
 <g fill="none" stroke="#444" stroke-width="1.1">
  <circle cx="908.4" cy="13.6" r="6"/>
  <ellipse cx="908.4" cy="13.6" rx="2.6" ry="6"/>
  <path d="M902.4 11.5h12M902.4 15.7h12"/>
  <path d="M938.5 16l2.5 3 5-5.5" stroke-width="1.3"/>
  <rect x="1013.5" y="7.5" width="12.5" height="12.5"/>
  <rect x="1015.5" y="9.5" width="8.5" height="8.5" stroke-width="0.9"/>
  <path d="M1017 11.5h5.5M1017 13.5h5.5M1017 15.5h5.5" stroke-width="0.9"/>
  <rect x="1045.5" y="7.5" width="12.5" height="12.5"/>
  <rect x="1047.5" y="11.5" width="8.5" height="5" rx="2.5" stroke-width="0.9"/>
  <path d="M1049 9.5h5.5M1049 18.5h5.5M1049 14h5.5" stroke-width="0.9"/>
  <circle cx="1083.3" cy="13.5" r="7"/>
  <path d="M1080.3 13.5h6"/>
  <circle cx="1189.2" cy="13.5" r="7"/>
  <path d="M1186.2 13.5h6M1189.2 10.5v6"/>
 </g>
 <text x="932.5" y="13.5" font-family="Liberation Sans" font-weight="bold" font-size="7" fill="#444" letter-spacing="-0.3">ABC</text>
 <g fill="none" stroke="#fff" stroke-width="1.1">
  <rect x="972.5" y="7.5" width="10" height="11.5"/>
  <path d="M974.5 10h6M974.5 12.5h6M974.5 15h4"/>
  <path d="M980 14l5-5.5 1.4 1.3-5 5.5z"/>
 </g>
 <rect x="979" y="14.5" width="9.5" height="7" rx="1.8" fill="#f0d030"/>
 <path d="M981 21l1.5 1.8 1.5-1.8z" fill="#f0d030"/>
 <path d="M981.3 17h5M981.3 19h5" stroke="#444" stroke-width="0.9"/>
</svg>
</body></html>
